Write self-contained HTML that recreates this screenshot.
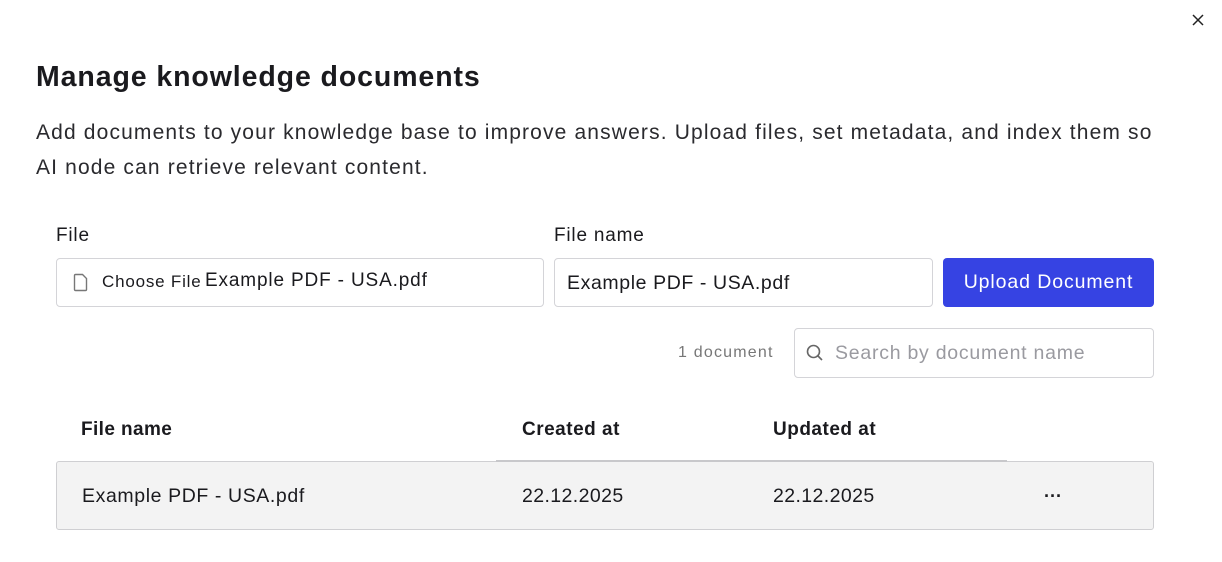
<!DOCTYPE html>
<html><head><style>
body{margin:0;width:1222px;height:562px;background:#fff;font-family:"Liberation Sans",sans-serif;color:#1a1a1e;position:relative;overflow:hidden}
.a{position:absolute;white-space:nowrap}
.box{position:absolute;border:1px solid #d4d4d8;border-radius:4px;box-sizing:border-box;background:#fff}
</style></head><body>
<svg class="a" style="left:1191px;top:13px" width="14" height="14" viewBox="0 0 14 14"><path d="M2 2L12 12M12 2L2 12" stroke="#222" stroke-width="1.5"/></svg>
<div class="a" style="left:36px;top:61px;font-size:28.5px;font-weight:bold;letter-spacing:0.9px">Manage knowledge documents</div>
<div class="a" style="left:36px;top:115px;font-size:21px;line-height:35px;color:#2a2a2e;letter-spacing:1.15px">Add documents to your knowledge base to improve answers. Upload files, set metadata, and index them so<br>AI node can retrieve relevant content.</div>
<div class="a" style="left:56px;top:225px;font-size:19px;letter-spacing:0.8px">File</div>
<div class="a" style="left:554px;top:225px;font-size:19px;letter-spacing:0.8px">File name</div>
<div class="box" style="left:56px;top:258px;width:488px;height:49px"></div>
<svg class="a" style="left:73px;top:273px" width="16" height="19" viewBox="0 0 16 19"><path d="M2.5 1.5h7l4 4v11a1 1 0 0 1-1 1h-10a1 1 0 0 1-1-1v-14a1 1 0 0 1 1-1z" fill="none" stroke="#777" stroke-width="1.4"/></svg>
<div class="a" style="left:102px;top:272px;font-size:17px;letter-spacing:0.8px">Choose File</div>
<div class="a" style="left:205px;top:270px;font-size:19px;letter-spacing:0.85px">Example PDF - USA.pdf</div>
<div class="box" style="left:554px;top:258px;width:379px;height:49px"></div>
<div class="a" style="left:567px;top:272px;font-size:19.5px;letter-spacing:0.6px">Example PDF - USA.pdf</div>
<div class="a" style="left:943px;top:258px;width:211px;height:49px;background:#3643e3;border-radius:4px;color:#fff;font-size:19.5px;text-align:center;line-height:49px;letter-spacing:0.9px">Upload Document</div>
<div class="a" style="left:678px;top:344px;font-size:16px;color:#777;letter-spacing:1.2px">1 document</div>
<div class="box" style="left:794px;top:328px;width:360px;height:50px"></div>
<svg class="a" style="left:805px;top:343px" width="20" height="20" viewBox="0 0 20 20"><circle cx="8.5" cy="8.5" r="6" fill="none" stroke="#666" stroke-width="1.6"/><path d="M13 13l4 4" stroke="#666" stroke-width="1.6"/></svg>
<div class="a" style="left:835px;top:342px;font-size:19.5px;color:#9a9aa0;letter-spacing:0.75px">Search by document name</div>
<div class="a" style="left:81px;top:419px;font-size:19px;font-weight:600;letter-spacing:0.4px">File name</div>
<div class="a" style="left:522px;top:419px;font-size:19px;font-weight:600;letter-spacing:0.5px">Created at</div>
<div class="a" style="left:773px;top:419px;font-size:19px;font-weight:600;letter-spacing:0.5px">Updated at</div>
<div class="a" style="left:56px;top:461px;width:1098px;height:69px;background:#f3f3f3;border:1px solid #cfcfd2;border-radius:3px;box-sizing:border-box"></div>
<div class="a" style="left:496px;top:460px;width:511px;height:2px;background:#c8c8cb"></div>
<div class="a" style="left:82px;top:485px;font-size:19.5px;letter-spacing:0.6px">Example PDF - USA.pdf</div>
<div class="a" style="left:522px;top:485px;font-size:19.5px;letter-spacing:0.4px">22.12.2025</div>
<div class="a" style="left:773px;top:485px;font-size:19.5px;letter-spacing:0.4px">22.12.2025</div>
<div class="a" style="left:1044px;top:486px;font-size:18px;font-weight:bold">···</div>
</body></html>
